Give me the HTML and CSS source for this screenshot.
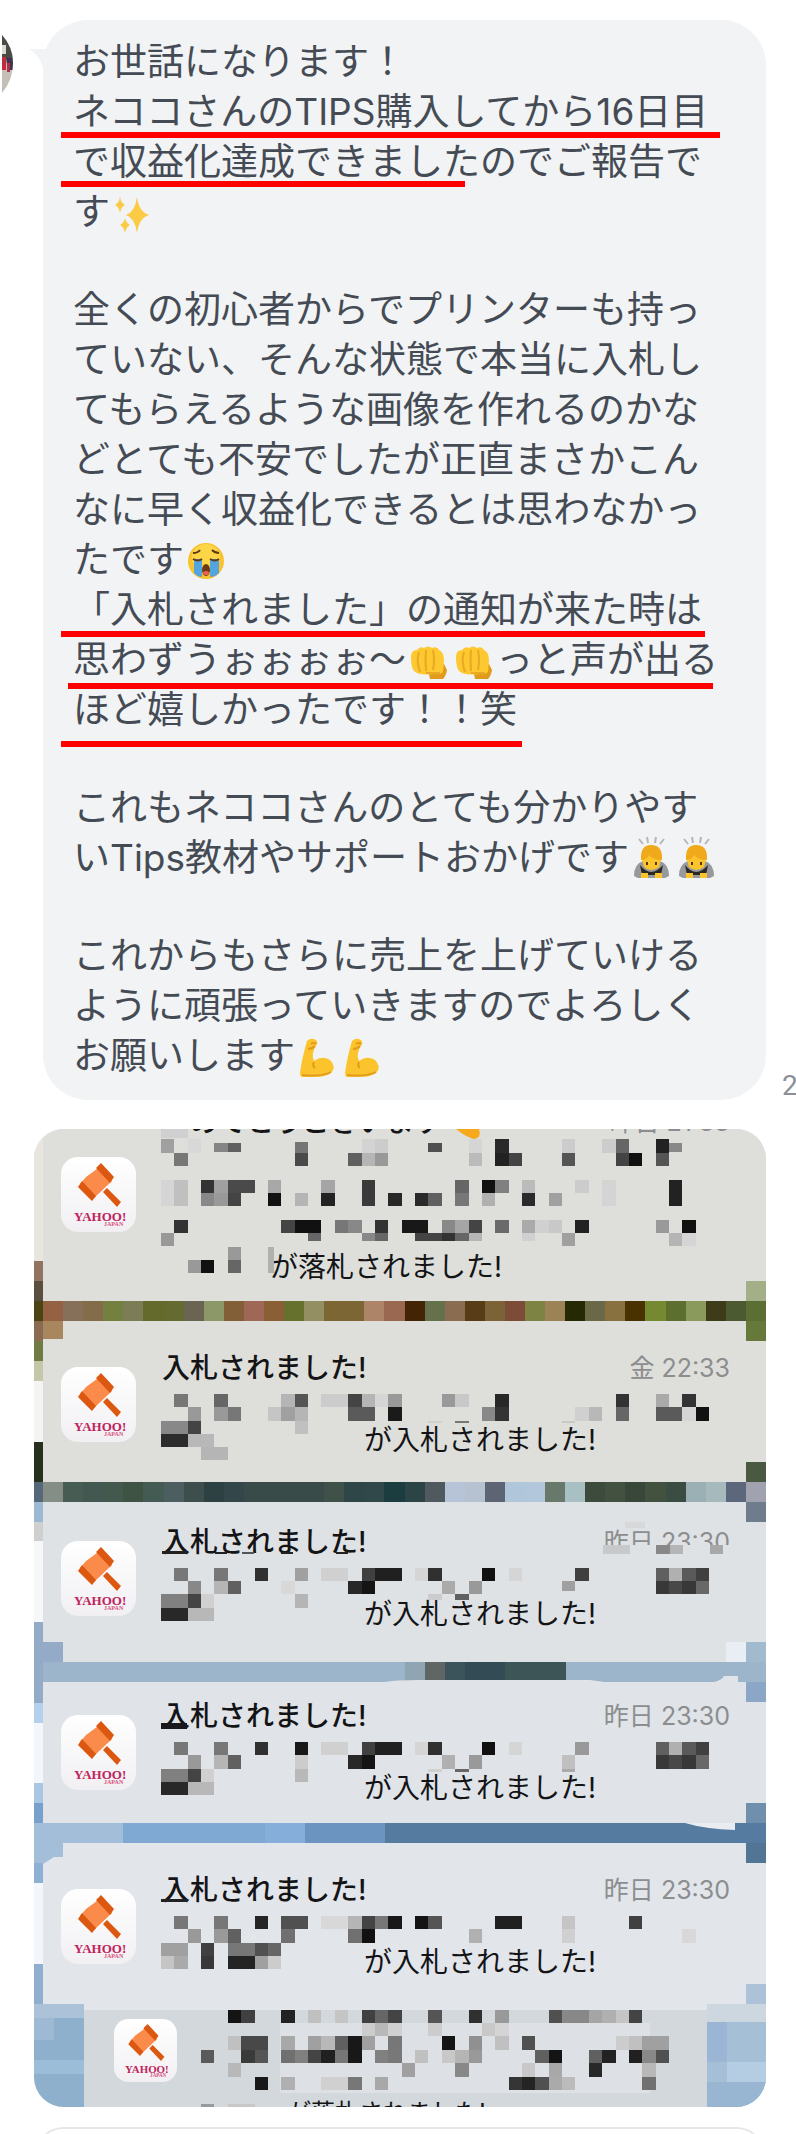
FILE: index.html
```html
<!DOCTYPE html>
<html lang="ja">
<head>
    <meta charset="UTF-8">
    <meta name="viewport" content="width=device-width, initial-scale=1.0">
    <title>トーク</title>
    <link rel="stylesheet" href="styles.css">
</head>
<body>

<!-- Shared drawings -->
<svg class="defs" aria-hidden="true">
    <symbol id="sparkles" viewBox="0 0 45 45">
        <g fill="#fbcb45">
            <path d="M27 8 Q29 23 39 26 Q29 29 27 44 Q25 29 16 26 Q25 23 27 8Z"/>
            <path d="M10 8 Q11 14 15 16 Q11 18 10 24 Q9 18 5 16 Q9 14 10 8Z"/>
            <path d="M15 29 Q16 34 20 36 Q16 38 15 44 Q14 38 10 36 Q14 34 15 29Z"/>
        </g>
    </symbol>
    <symbol id="sob" viewBox="0 0 45 45">
        <circle cx="22" cy="24" r="18" fill="#f9c22e"/>
        <circle cx="22" cy="21" r="14" fill="#fdd648"/>
        <path d="M10 22h8v18q-4 0-8-4z M26 22h9v14q-4 4-9 4z" fill="#54a4e0"/>
        <path d="M9 22q5 3 9 0 M26 22q5 3 9 0 M9 16q5 0 7-3 M28 13q3 3 7 3" fill="none" stroke="#5c3a12" stroke-width="2"/>
        <ellipse cx="22" cy="33" rx="4" ry="6" fill="#6b3a14"/>
        <ellipse cx="22" cy="36" rx="3" ry="2" fill="#e9605a"/>
    </symbol>
    <symbol id="fist" viewBox="0 0 45 45">
        <path d="M22 32 L24 42 H37 Q40 39 41 33 L38 27Z" fill="#e09a1c"/>
        <path d="M5 20 Q5 13 11 13 Q14 9 18 11 Q22 8 26 11 Q31 9 33 13 Q38 15 38 24 L37 35 Q34 38 29 37 Q13 39 8 34 Q5 30 5 20Z" fill="#fdc830"/>
        <path d="M13 15q-3 9 1 20 M20 13q-1 10 0 21 M27 13q2 10 0 20 M20 36h14" fill="none" stroke="#e9a922" stroke-width="2"/>
    </symbol>
    <symbol id="bow" viewBox="0 0 45 45">
        <path d="M5 41 Q5 29 14 26 H31 Q40 29 40 41 L36 43 H9Z" fill="#97999d"/>
        <path d="M11 30 Q22 44 34 30 L32 40 H13Z" fill="#2b2723"/>
        <path d="M13 25 Q12 11 22 11 Q33 11 32 25 L30 32 Q22 38 15 32Z" fill="#fcc42c"/>
        <path d="M12 25 Q11 10 22 10 Q34 10 33 25 Q24 25 20 20 Q18 25 12 25Z" fill="#efa91b"/>
        <path d="M18 27v3 M27 27v3" stroke="#55381a" stroke-width="2"/>
        <path d="M12 38h7v5h-7z M26 38h7v5h-7z" fill="#fcc42c"/>
        <path d="M10 4l4 5 M18 2l1 6 M27 2l-1 6 M35 4l-4 5" stroke="#b4b6ba" stroke-width="2"/>
    </symbol>
    <symbol id="muscle" viewBox="0 0 45 45">
        <path d="M12 8 Q16 4 21 7 Q24 10 20 14 L18 20 Q17 24 19 28 Q27 22 35 27 Q42 34 36 40 Q31 44 20 44 H7 Q5 43 5 40 Q7 25 12 8Z" fill="#fcc42c"/>
        <path d="M13 16q4 0 7-3 M16 11q3-2 5 0 M19 29q-2 4 1 6 M7 42q20 2 29-3" fill="none" stroke="#e29c1c" stroke-width="2"/>
    </symbol>
    <linearGradient id="app-bg" x1="0" y1="0" x2="0" y2="1">
        <stop offset="0" stop-color="#fff"/>
        <stop offset="1" stop-color="#f1eff2"/>
    </linearGradient>
    <symbol id="auction" viewBox="0 0 75 75">
        <rect width="75" height="75" rx="17" fill="url(#app-bg)"/>
        <path d="M25 20 L40 9 L51 24 L33 41 L19 27Z" fill="#fb8b4b"/>
        <path d="M35 11 L40 6 L53 20 L49 26Z M17 30 L21 24 L35 39 L31 44Z M42 35 L46 31 L60 45 L56 50Z" fill="#dc570f"/>
        <text x="13" y="64" class="app-name">YAHOO!</text>
        <text x="43" y="69" class="app-country">JAPAN</text>
    </symbol>
</svg>

<main class="talk">
    <section class="message">
        <svg class="avatar" viewBox="0 0 14 62" role="img" aria-label="プロフィール画像">
            <clipPath id="avatar-clip"><path d="M2 2 Q13 14 13 30 Q13 47 2 60Z"/></clipPath>
            <g clip-path="url(#avatar-clip)">
                <rect width="14" height="62" fill="#c5bfb8"/>
                <path d="M0 0h14v26H0z" fill="#4a4b45"/>
                <path d="M2 12h4v9H2z" fill="#d9dcd2"/>
                <path d="M2 24h4v13H2z" fill="#c22b3c"/>
                <path d="M6 25h7v12H8z" fill="#3f3350"/>
                <path d="M7 30h3v9H7z" fill="#a83248"/>
            </g>
        </svg>
        <div class="bubble">
            <svg class="tail" viewBox="0 0 20 18" aria-hidden="true"><path d="M0 0 H20 V18 H14 Q10 6 0 0Z" fill="#f1f3f5"/></svg>
            <p>お世話になります！<br>
            ネココさんのTIPS購入してから16日目<br>
            で収益化達成できましたのでご報告で<br>
            す<svg class="emoji" role="img" aria-label="キラキラ"><use href="#sparkles"/></svg></p>
            <p>全くの初心者からでプリンターも持っ<br>
            ていない、そんな状態で本当に入札し<br>
            てもらえるような画像を作れるのかな<br>
            どとても不安でしたが正直まさかこん<br>
            なに早く収益化できるとは思わなかっ<br>
            たです<svg class="emoji" role="img" aria-label="大泣き"><use href="#sob"/></svg><br>
            「入札されました」の通知が来た時は<br>
            思わずうぉぉぉぉ〜<svg class="emoji" role="img" aria-label="パンチ"><use href="#fist"/></svg><svg class="emoji" role="img" aria-label="パンチ"><use href="#fist"/></svg>っと声が出る<br>
            ほど嬉しかったです！！笑</p>
            <p>これもネココさんのとても分かりやす<br>
            いTips教材やサポートおかげです<svg class="emoji" role="img" aria-label="お辞儀"><use href="#bow"/></svg><svg class="emoji" role="img" aria-label="お辞儀"><use href="#bow"/></svg></p>
            <p>これからもさらに売上を上げていける<br>
            ように頑張っていきますのでよろしく<br>
            お願いします<svg class="emoji" role="img" aria-label="力こぶ"><use href="#muscle"/></svg><svg class="emoji" role="img" aria-label="力こぶ"><use href="#muscle"/></svg></p>
            <!-- red pen marks over the text -->
            <span class="mark mark-tips"></span>
            <span class="mark mark-profit"></span>
            <span class="mark mark-notice"></span>
            <span class="mark mark-voice"></span>
            <span class="mark mark-happy"></span>
        </div>
        <span class="time">2</span>
    </section>

    <section class="photo">
        <svg class="layer" id="wallpaper" viewBox="34 1129 732 978" preserveAspectRatio="none" aria-hidden="true"></svg>
        <article class="notice notice-first">
            <svg class="app-icon" role="img" aria-label="Yahoo! JAPAN"><use href="#auction"/></svg>
            <h2>おめでとうございます</h2>
            <time>昨日 21:33</time>
            <p class="won">が落札されました!</p>
        </article>
        <article class="notice">
            <svg class="app-icon" role="img" aria-label="Yahoo! JAPAN"><use href="#auction"/></svg>
            <h2>入札されました!</h2>
            <time>金 22:33</time>
            <p>が入札されました!</p>
        </article>
        <article class="notice">
            <svg class="app-icon" role="img" aria-label="Yahoo! JAPAN"><use href="#auction"/></svg>
            <h2>入札されました!</h2>
            <time>昨日 23:30</time>
            <p>が入札されました!</p>
        </article>
        <article class="notice">
            <svg class="app-icon" role="img" aria-label="Yahoo! JAPAN"><use href="#auction"/></svg>
            <h2>入札されました!</h2>
            <time>昨日 23:30</time>
            <p>が入札されました!</p>
        </article>
        <article class="notice">
            <svg class="app-icon" role="img" aria-label="Yahoo! JAPAN"><use href="#auction"/></svg>
            <h2>入札されました!</h2>
            <time>昨日 23:30</time>
            <p>が入札されました!</p>
        </article>
        <article class="notice-last">
            <svg class="app-icon" role="img" aria-label="Yahoo! JAPAN"><use href="#auction"/></svg>
            <p>が落札されました!</p>
        </article>
        <svg class="layer" id="mosaic" viewBox="34 1129 732 978" preserveAspectRatio="none" aria-hidden="true"></svg>
    </section>

    <div class="next-message"><div class="next-card"></div></div>
</main>

<script src="mosaic.js"></script>
</body>
</html>
```
FILE: styles.css
```css
* { box-sizing: border-box; }
body { margin: 0; background-color: #fff; font-family: Inter, "Noto Sans CJK JP", sans-serif; }
.defs { position: absolute; width: 0; height: 0; }
.talk { padding-top: 20px; overflow: hidden; }
p, h2 { margin: 0; }

/* Message */
.message { display: flex; align-items: flex-start; overflow: hidden; }
.avatar { flex: none; width: 14px; height: 62px; margin: 13px 29px 0 0; }
.bubble { position: relative; flex: 1; padding: 17px 0 19px 30px; border-radius: 45px; background-color: #f1f3f5; color: #454b54; font-size: 37px; line-height: 50px; white-space: nowrap; }
.bubble p + p { margin-top: 48px; }
.tail { position: absolute; left: -14px; top: 29px; width: 20px; height: 18px; }
.emoji { width: 45px; height: 45px; vertical-align: -5px; margin-bottom: -4px; }
.time { flex: none; align-self: flex-end; width: 14px; margin: 0 0 0 16px; color: #8b9097; font-family: Roboto, sans-serif; font-size: 28px; line-height: 28px; }

.mark { position: absolute; left: 18px; height: 6px; background-color: #f00; }
.mark-tips { top: 112px; width: 659px; }
.mark-profit { top: 161px; width: 404px; }
.mark-notice { top: 611px; width: 644px; }
.mark-voice { top: 663px; left: 25px; width: 645px; }
.mark-happy { top: 721px; width: 461px; }

/* Photo of the notifications */
.photo { position: relative; margin: 29px 30px 0 34px; overflow: hidden; border-radius: 30px; background-color: #dedfda; color: #141416; font-size: 28px; line-height: 36px; }
.layer { position: absolute; left: 0; top: 0; width: 100%; height: 100%; }
.notice { position: relative; display: grid; grid-template-columns: 75px 1fr auto; grid-template-rows: 36px 36px; row-gap: 36px; column-gap: 26px; align-items: center; margin: 0 36px 66px 27px; }
.notice .app-icon { grid-row: 1 / 3; width: 75px; height: 75px; }
.notice h2 { font-size: 28px; font-weight: 500; }
.notice time { color: #8c8d8f; font-size: 25px; }
.notice p { grid-column: 2 / 4; padding-left: 202px; }
.notice-first { margin-top: -25px; margin-bottom: 65px; grid-template-rows: 36px 145px; row-gap: 0; }
.notice-first p { align-self: end; }
.notice .won { padding-left: 108px; }
.notice-last { position: relative; display: flex; gap: 110px; height: 88px; margin: -27px 36px 0 80px; font-size: 24px; }
.notice-last .app-icon { flex: none; width: 63px; height: 63px; }
.notice-last p { padding-top: 76px; white-space: nowrap; }
.app-name { font: bold 13px "Liberation Serif", serif; fill: #c0235c; }
.app-country { font: bold 6px "Liberation Serif", serif; fill: #d8507e; }

.next-message { height: 27px; margin: 0 30px 0 34px; padding-top: 20px; overflow: hidden; }
.next-card { height: 80px; border: 2px solid #e6e7e9; border-radius: 30px; }
```
FILE: mosaic.js
```javascript
const SVG_NS = 'http://www.w3.org/2000/svg';
const wallpaper = document.getElementById('wallpaper');
const mosaic = document.getElementById('mosaic');

function addRect(parent, x, y, width, height, fill) {
    const rect = document.createElementNS(SVG_NS, 'rect');
    rect.setAttribute('x', x);
    rect.setAttribute('y', y);
    rect.setAttribute('width', width);
    rect.setAttribute('height', height);
    rect.setAttribute('fill', fill);
    rect.setAttribute('shape-rendering', 'crispEdges');
    parent.appendChild(rect);
}

// --- Wallpaper and card panels: x, y, width, height, color ---
const panels = [
    [34, 1129, 732, 373, '#dedfda'], [34, 1502, 732, 160, '#dfe2e4'],
    [34, 1662, 732, 20, '#9db5cb'], [34, 1682, 732, 141, '#e0e4e8'],
    [34, 1823, 732, 20, '#557ba0'], [34, 1843, 732, 164, '#e2e5ea'],
    [34, 2004, 50, 103, '#8fb0cc'], [707, 2004, 59, 103, '#a5bfd6'],
    [84, 2008, 623, 99, '#d3d8dd'], [84, 2004, 623, 6, '#e2e5ea'],
    [34, 2004, 50, 14, '#abc2d9'], [34, 2018, 20, 22, '#9db9d3'], [34, 2060, 50, 14, '#9bbdd8'],
    [707, 2004, 59, 18, '#cdd7df'], [707, 2022, 20, 40, '#9ab6d4'], [727, 2062, 39, 20, '#b4cde3'],
    [707, 2082, 59, 25, '#98b6d1'], [280, 2023, 370, 70, '#dde1e6'],
    [34, 1823, 89, 20, '#a3bed9'], [123, 1823, 142, 20, '#7fa8d2'],
    [265, 1823, 40, 20, '#86aedb'], [305, 1823, 80, 20, '#6b94c0'],
    [405, 1662, 20, 20, '#8fa5b3'], [425, 1662, 20, 20, '#5f6664'],
    [445, 1662, 20, 20, '#3b535b'], [465, 1662, 40, 20, '#324b55'], [505, 1662, 61, 20, '#3e5558'],
    // left edge
    [34, 1129, 9, 132, '#e8e6df'], [34, 1261, 9, 20, '#8f7460'], [34, 1281, 9, 20, '#5a4e3e'],
    [34, 1321, 9, 20, '#8a6a50'], [34, 1341, 9, 20, '#6f7a45'], [34, 1361, 9, 20, '#c5c7a8'],
    [34, 1381, 9, 61, '#f4f4f2'], [34, 1442, 9, 40, '#26301c'], [34, 1502, 9, 20, '#9db8d2'],
    [34, 1522, 9, 19, '#cfd0cd'], [34, 1541, 9, 81, '#f5f7f8'], [34, 1622, 9, 81, '#93abc6'],
    [34, 1703, 9, 20, '#b5d0ec'], [34, 1723, 9, 60, '#f3f7fb'], [34, 1783, 9, 20, '#a9c6e2'],
    [34, 1803, 9, 20, '#78a0cc'], [34, 1843, 9, 20, '#a3bed9'], [34, 1863, 9, 20, '#8fb0d5'],
    [34, 1883, 9, 81, '#f3f7fb'], [34, 1964, 9, 40, '#8faed0'],
    [43, 1321, 20, 18, '#a8865e'], [43, 1642, 20, 20, '#93abc6'], [43, 1843, 20, 14, '#a3bed9'],
    // right edge
    [746, 1281, 20, 20, '#a3af86'], [746, 1321, 20, 20, '#66783a'], [746, 1462, 20, 20, '#4a5a42'],
    [746, 1502, 20, 20, '#6f7c8c'], [746, 1642, 20, 20, '#a2bace'], [726, 1642, 20, 20, '#e9eef4'],
    [746, 1682, 20, 20, '#8ba6c6'], [746, 1803, 20, 20, '#6f8fac'], [746, 1843, 20, 20, '#527596'],
    [746, 1984, 20, 20, '#abc2d8']
];
panels.forEach(p => addRect(wallpaper, ...p));

// torn edges of the panels
[['M385 1682 Q395 1680 420 1680 H590 L604 1682Z', '#e0e4e8'],
 ['M714 1682 Q722 1680 724 1676 H738 V1682Z', '#e0e4e8'],
 ['M685 1823 Q705 1829 735 1830 V1823Z', '#e9edf1'],
 ['M43 1857 H63 L54 1857 L43 1864Z', '#a3bed9']].forEach(([d, fill]) => {
    const path = document.createElementNS(SVG_NS, 'path');
    path.setAttribute('d', d);
    path.setAttribute('fill', fill);
    wallpaper.appendChild(path);
});

// --- Strips between the cards, one color for each block ---
function addStrip(y, colors) {
    colors.split(' ').forEach((color, i) => {
        addRect(wallpaper, i ? 23 + i * 20.08 : 34, y, i ? 21 : 9, 20, '#' + color);
    });
}
addStrip(1301, '4c4315 946142 87705a 836c4a 74803f 7c7c57 646a2c 646a30 696552 8d9868 835f38 9f6755 8a5f35 65712c 948f63 7c6634 7c6634 ad8468 9a6850 432405 65714a 8a6d50 583c18 7c6337 7c4c38 7d8443 9c8356 252a04 6b6847 88703f 4a3200 758a30 5d6f2e 8a9a5c 3e3b19 4c5a32 5b6f35');
addStrip(1482, '55687a 858d87 475c52 425850 43594e 3f5344 445b53 4c5e60 3e4e4d 2d4143 33474b 384b48 384b48 384b48 384b48 3f5149 2e4648 30484a 1c3d40 2c4446 50595e b7c3d6 b6c2d2 5d6575 b0c6da b3c7dc 68786b a8c0c4 3c4b3b 435140 39473b 43523e 3b4c43 9ab0b5 a6b9bc 5c677b a0a2b0');

// --- Censored text: y, height, then column:length:gray ---
const rows = [
    [1129, 9, '0:2:d0'],
    [1139, 14, '0:1:a0 2:1:d8 15:1:d3 16:1:cc 23:1:d5 25:1:2a 30:1:cc 33:1:cc 34:1:66 37:1:22'],
    [1143, 9, '4:1:85 5:1:60 20:1:50 38:1:88'],
    [1142, 11, '10:1:75'],
    [1153, 13, '1:1:77 10:1:4a 14:1:60 15:1:b5 16:1:99 23:1:bb 25:1:22 26:1:44 30:1:55 34:1:44 35:1:11 37:1:55'],
    [1180, 13, '0:1:d5 1:1:c0 3:1:33 4:1:a0 5:2:4a 8:1:a8 12:1:a5 15:1:3a 22:1:66 24:1:11 25:1:80 27:1:bb 31:1:cc 33:1:d4 38:1:22'],
    [1193, 13, '0:1:d5 1:1:c0 3:1:88 4:1:99 5:1:44 8:1:11 10:1:b5 12:1:22 15:1:3a 17:1:28 19:1:2a 20:1:60 22:1:77 24:1:b0 27:1:2a 29:1:a0 33:1:d4 38:1:22'],
    [1220, 13, '1:1:33 9:1:44 10:2:11 13:1:77 14:1:88 16:1:33 18:2:18 21:1:88 22:1:a5 23:1:44 25:1:6a 27:1:aa 28:1:d0 29:1:c8 31:1:22 37:1:99 39:1:11'],
    [1233, 13, '0:1:99 30:1:a0 38:1:b5 39:1:d5'],
    [1233, 8, '11:1:66 15:1:88 16:1:66 19:2:44 21:1:33 22:1:66 23:1:b5 27:1:d0'],
    [1247, 13, '5:1:99'],
    [1260, 13, '2:1:99 3:1:11 5:1:66'],

    [1394, 13, '1:1:77 4:1:66 9:1:b5 10:1:55 12:2:cc 14:1:44 15:1:b5 16:1:d5 17:1:99 21:1:99 22:1:c8 25:1:28 34:1:33 37:1:aa 39:1:33'],
    [1407, 14, '2:1:99 4:1:99 5:1:77 8:1:c5 9:1:a0 10:1:b5 14:2:5a 17:1:1a 24:1:88 25:1:33 31:1:d0 32:1:b8 34:1:66 37:2:5a 39:1:d5 40:1:11'],
    [1421, 13, '0:2:88 2:1:44 10:1:c0'],
    [1421, 2, '20:1:d0 22:1:77 30:1:c8'],
    [1434, 13, '0:2:2c 2:2:b8'],
    [1447, 13, '3:2:b5'],

    [1568, 13, '1:1:77 4:1:77 7:1:30 10:1:a0 12:2:d0 15:1:40 16:2:20 19:1:d5 20:1:30 24:1:11 26:1:d5 31:1:40 37:1:60 38:1:b0 39:1:5a 40:1:40'],
    [1581, 13, '2:1:88 4:1:b5 5:1:60 9:1:d8 14:1:28 15:1:14 21:1:aa 23:1:99 37:1:38 38:1:48 39:1:38 40:1:68'],
    [1581, 10, '30:1:a0'],
    [1594, 14, '0:2:80 2:1:44 3:1:d0 10:1:b5'],
    [1594, 6, '20:1:cc 22:1:60'],
    [1608, 13, '0:2:28 2:2:b8'],

    [1742, 13, '1:1:77 4:1:77 7:1:30 10:1:18 12:2:d0 15:1:40 16:2:20 19:1:d5 20:1:30 24:1:11 26:1:d5 31:1:99 37:1:60 38:1:b0 39:1:5a 40:1:40'],
    [1755, 14, '2:1:99 4:1:b5 5:1:60 10:1:cc 14:1:28 15:1:14 21:1:b0 23:1:99 30:1:c0 37:1:38 38:1:48 39:1:38 40:1:68'],
    [1769, 13, '0:2:80 2:1:44 3:1:d0 10:1:b8'],
    [1769, 3, '20:1:d0 22:1:66 30:1:aa'],
    [1782, 13, '0:2:28 2:2:b8'],

    [1916, 13, '1:1:77 4:1:77 7:1:25 9:2:50 12:2:d8 14:1:b5 15:1:44 16:1:77 17:1:18 19:1:14 20:1:55 25:2:20 30:1:c5 35:1:40'],
    [1929, 14, '2:1:99 4:1:99 5:1:60 9:1:70 14:1:70 15:1:11 23:1:b0 30:1:d0 39:1:d8'],
    [1943, 13, '0:2:a0 3:1:40 5:2:77 7:1:50 8:1:66'],
    [1956, 13, '0:1:c5 1:1:aa 3:1:38 5:2:24 7:1:a0 8:1:cc'],

    [2010, 13, '5:1:14 6:1:40 9:1:22 11:1:c0 13:1:c5 15:1:40 16:1:66 17:1:44 20:1:55 23:1:30 25:1:99 29:1:50 30:2:88 32:1:a5 33:1:b0 34:1:c5 35:1:44'],
    [2023, 13, '15:1:cc 16:1:b8 17:1:d0 20:1:cc 24:1:c8 25:1:d4'],
    [2036, 14, '5:1:c0 6:2:48 9:1:a8 11:1:a0 12:1:b8 13:1:60 14:1:18 15:1:a0 17:1:77 21:1:14 23:1:90 25:1:c0 27:1:50 34:1:cc 35:1:c0 36:2:a0'],
    [2050, 13, '3:1:5a 6:1:3a 7:1:55 9:1:70 10:1:80 11:1:44 12:1:20 13:1:77 14:1:18 16:1:80 17:1:78 19:1:c0 21:1:c8 22:1:b5 23:1:99 28:1:60 29:1:14 32:1:60 33:1:22 35:1:20 36:1:88 37:1:50'],
    [2063, 14, '5:1:b8 18:1:a0 22:1:88 27:1:c8 29:1:a8 32:1:28 36:1:b8'],
    [2077, 13, '7:1:18 9:1:b0 12:2:d0 14:1:77 16:1:a8 26:1:35 27:1:24 28:1:50 29:1:aa 30:1:bb 36:1:70'],
    [2104, 3, '3:1:99 5:1:c8 6:1:c8']
];

// cover over the lower half of one date
addRect(mosaic, 600, 1545, 135, 12, '#dfe2e4');
addRect(mosaic, 625, 1522, 20, 6, '#d6d8da');
addRect(mosaic, 603, 1545, 27, 9, '#c8c9ca');
addRect(mosaic, 656, 1545, 14, 9, '#888');
addRect(mosaic, 670, 1545, 13, 9, '#b5b5b5');
addRect(mosaic, 710, 1545, 13, 9, '#a8a8a8');

// smears under the first letters
addRect(mosaic, 162, 1551, 25, 3, '#222');
addRect(mosaic, 215, 1552, 12, 2, '#222');
addRect(mosaic, 242, 1552, 12, 2, '#555');
addRect(mosaic, 281, 1552, 12, 2, '#222');
addRect(mosaic, 336, 1552, 12, 2, '#222');
addRect(mosaic, 161, 1723, 26, 6, '#19191c');
addRect(mosaic, 161, 1899, 26, 3, '#222');
addRect(mosaic, 268, 1247, 6, 26, '#b0b0af');

rows.forEach(([y, height, cells]) => {
    cells.split(' ').forEach(cell => {
        const [col, length, gray] = cell.split(':');
        addRect(mosaic, 161 + col * 13.37, y, length * 13.37, height, '#' + gray + gray + gray);
    });
});

// tip of the emoji cut off by the top edge
const tip = document.createElementNS(SVG_NS, 'path');
tip.setAttribute('d', 'M456 1129 H479 Q482 1138 474 1139 Q466 1137 456 1129Z');
tip.setAttribute('fill', '#f6a91c');
mosaic.appendChild(tip);
```
